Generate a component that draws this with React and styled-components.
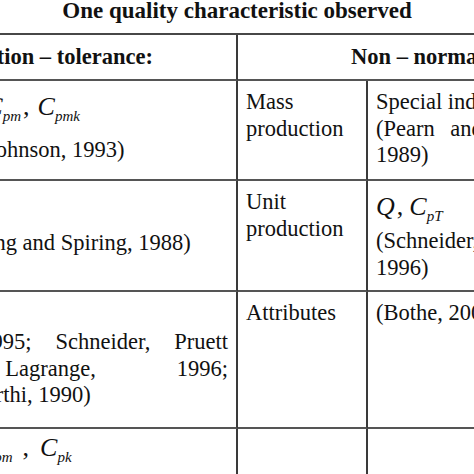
import React from 'react';
import styled, { createGlobalStyle, css } from 'styled-components';

const GlobalStyle = createGlobalStyle`
  html, body {
    margin: 0;
    padding: 0;
    background: #fff;
    overflow: hidden;
  }
  *, *::before, *::after {
    box-sizing: border-box;
  }
`;

const Page = styled.div`
  width: 474px;
  height: 474px;
  overflow: hidden;
  background: #fff;
  color: #111;
  font-family: "Liberation Serif", "Times New Roman", serif;
  font-size: 22.5px;
`;

// the figure is wider than the window: it is cropped on both sides
const Figure = styled.div`
  width: 962px;
  margin-left: -244px;
`;

const Title = styled.div`
  height: 33px;
  font-size: 23px;
  line-height: 22px;
  text-align: center;
  font-weight: bold;
  white-space: nowrap;
`;

const Table = styled.div`
  display: grid;
  grid-template-columns: 126px 354px 130px 350px;
  grid-template-rows: 46px 100px 111px 137px 80px;
  border-top: 2px solid #474747;
  border-left: 2px solid #474747;
`;

const Cell = styled.div`
  grid-column: span ${p => p.$span || 1};
  border-right: 2px solid #3a3a3a;
  border-bottom: 2px solid #555;
  padding: 8px 8px 0;
  overflow: hidden;

  ${p => p.$head && css`
    display: flex;
    align-items: center;
    justify-content: center;
    padding: 0 8px;
    font-weight: bold;
    white-space: nowrap;
  `}
`;

const Line = styled.div`
  line-height: 26.5px;
  white-space: nowrap;

  ${p => p.$justify && css`
    white-space: normal;
    text-align: justify;
    text-align-last: justify;
  `}
`;

const FormulaLine = styled.div`
  font-size: 26px;
  line-height: ${p => p.$h}px;
  margin-bottom: ${p => p.$gap || 0}px;
  white-space: nowrap;
`;

const Sym = styled.i`
  font-style: italic;
`;

const Sub = styled.sub`
  font-size: 15px;
  font-style: italic;
  vertical-align: -6px;
  line-height: 0;
`;

const Sep = styled.span`
  margin: 0 ${p => p.$after}px 0 ${p => p.$before}px;
`;

const Index = ({ sym = 'C', sub }) => (
  <>
    <Sym>{sym}</Sym>
    <Sub>{sub}</Sub>
  </>
);

const Comma = ({ before = 2, after = 8 }) => <Sep $before={before} $after={after}>,</Sep>;

export default function App() {
  return (
    <Page>
      <GlobalStyle />
      <Figure>
        <Title>One quality characteristic observed</Title>
        <Table>
          <Cell $head $span={2}>Normal distribution – tolerance:</Cell>
          <Cell $head $span={2}>Non – normal distribution</Cell>

          <Cell>
            <Line>Bilateral</Line>
          </Cell>
          <Cell>
            <FormulaLine $h={35} $gap={13}>
              <Index sub="p" /><Comma after={10} />
              <Index sub="pk" /><Comma after={10} />
              <Index sub="pm" /><Comma />
              <Index sub="pmk" />
            </FormulaLine>
            <Line>(Kotz and Johnson, 1993)</Line>
          </Cell>
          <Cell>
            <Line>Mass</Line>
            <Line>production</Line>
          </Cell>
          <Cell>
            <Line>Special indices <Sym>C</Sym><Sub>Np</Sub>, <Sym>C</Sym><Sub>Npk</Sub></Line>
            <Line $justify>(Pearn and Lin, 2002; Clements,</Line>
            <Line>1989)</Line>
          </Cell>

          <Cell>
            <Line>Target</Line>
            <Line>value</Line>
          </Cell>
          <Cell>
            <FormulaLine $h={35} $gap={6}>
              <Index sub="pm" />
            </FormulaLine>
            <Line>(Chan, Cheng and Spiring, 1988)</Line>
          </Cell>
          <Cell>
            <Line>Unit</Line>
            <Line>production</Line>
          </Cell>
          <Cell>
            <FormulaLine $h={35} $gap={4}>
              <Index sym="Q" sub="" /><Comma after={6} />
              <Index sub="pT" />
            </FormulaLine>
            <Line $justify>(Schneider, Pruett and Lagrange,</Line>
            <Line>1996)</Line>
          </Cell>

          <Cell>
            <Line>Asymmetric</Line>
            <Line>tolerance</Line>
          </Cell>
          <Cell>
            <FormulaLine $h={29}>
              <Index sub="pmk" />
            </FormulaLine>
            <Line $justify>(Pearn, 1995; Schneider, Pruett</Line>
            <Line $justify>and Lagrange, 1996;</Line>
            <Line>Pal and Murthi, 1990)</Line>
          </Cell>
          <Cell>
            <Line>Attributes</Line>
          </Cell>
          <Cell>
            <Line>(Bothe, 2001)</Line>
          </Cell>

          <Cell>
            <Line>Unilateral</Line>
          </Cell>
          <Cell>
            <FormulaLine $h={22}>
              <Index sub="p" /><Comma before={1} after={10} />
              <Index sub="pl" /><Comma before={1} after={6} />
              <Index sub="pm" /><Comma before={10} after={11} />
              <Index sub="pk" />
            </FormulaLine>
          </Cell>
          <Cell />
          <Cell />
        </Table>
      </Figure>
    </Page>
  );
}
